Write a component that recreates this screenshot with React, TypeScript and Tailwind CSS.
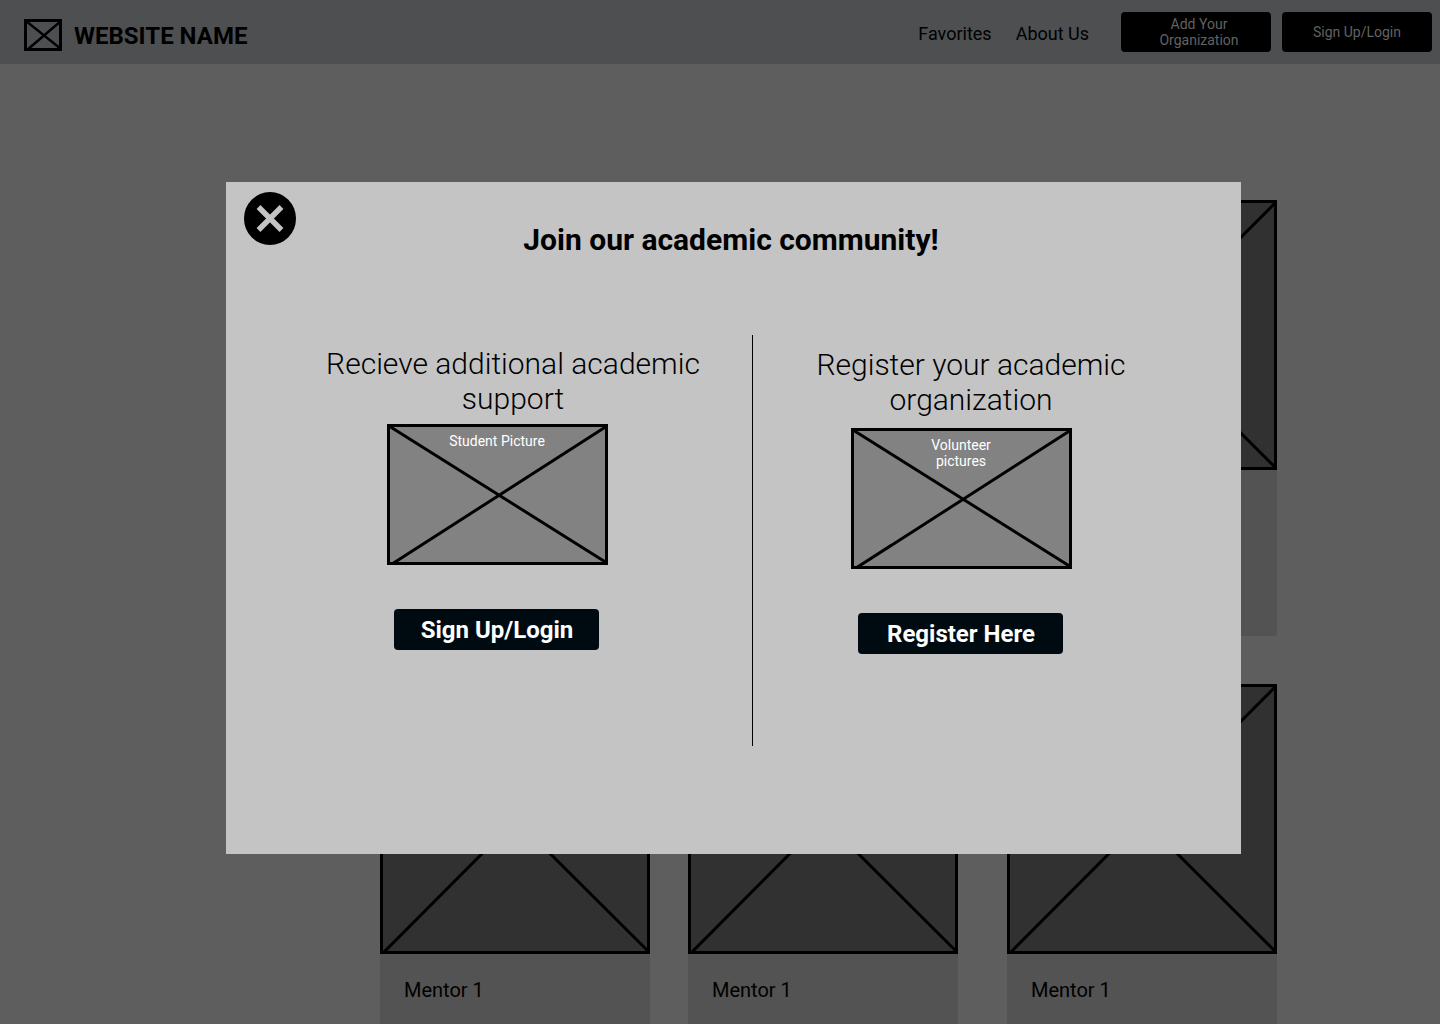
import React from "react";

function CrossBox({
  width,
  height,
  className,
  stroke = 3,
  inset = 3,
}: {
  width: number;
  height: number;
  className: string;
  stroke?: number;
  inset?: number;
}) {
  return (
    <svg viewBox={`0 0 ${width} ${height}`} className={className} aria-hidden="true">
      <rect
        x="1.5"
        y="1.5"
        width={width - 3}
        height={height - 3}
        stroke="#000"
        strokeWidth="3"
      />
      <path
        d={`M2 2L${width - 1} ${height - 2}M${inset} ${height - 1}L${width - 1} 2`}
        stroke="#000"
        strokeWidth={stroke}
      />
    </svg>
  );
}

function MentorCard({ name }: { name?: string }) {
  return (
    <article className="min-h-[436px] w-full max-w-[270px] bg-[#535353]">
      <CrossBox width={270} height={270} className="block w-full fill-[#313131]" />
      {name && <h3 className="px-6 pt-6 text-xl leading-6">{name}</h3>}
    </article>
  );
}

function Option({
  title,
  label,
  action,
  className,
  headingClass,
  pictureClass,
}: {
  title: string;
  label: string;
  action: string;
  className: string;
  headingClass: string;
  pictureClass: string;
}) {
  return (
    <section className={`flex flex-col items-center ${className}`}>
      <h2 className={`text-center text-[30px] leading-[35px] font-light ${headingClass}`}>
        {title}
      </h2>
      <div className={`grid w-[221px] ${pictureClass}`}>
        <CrossBox
          width={221}
          height={141}
          inset={5}
          className="col-start-1 row-start-1 block w-full fill-[#828282]"
        />
        <p className="z-10 col-start-1 row-start-1 mx-auto mt-[9px] max-w-[100px] text-center text-sm leading-4 text-white">
          {label}
        </p>
      </div>
      <button
        type="button"
        className="mt-11 mr-0.5 h-[41px] w-[205px] rounded bg-[#000b11] pl-0.5 text-2xl leading-7 font-bold text-white"
      >
        {action}
      </button>
    </section>
  );
}

export default function App() {
  return (
    <div className="h-screen overflow-hidden bg-[#5e5e5e] font-['Roboto',sans-serif] text-black">
      <header className="flex h-16 items-center justify-between bg-[#4d4f51] pr-2 pl-6">
        <a href="#home" className="flex items-center gap-3 pt-1.5">
          <CrossBox width={38} height={32} stroke={2.4} className="h-8 w-[38px] fill-none" />
          <span className="pt-0.5 text-2xl leading-7 font-bold">WEBSITE NAME</span>
        </a>
        <nav className="flex items-center text-lg leading-5">
          <a href="#favorites" className="mr-6 pt-1">
            Favorites
          </a>
          <a href="#about" className="mr-8 pt-1">
            About Us
          </a>
          <button
            type="button"
            className="mr-[11px] h-10 w-[150px] rounded bg-black pr-7 pl-[34px] text-sm leading-4 text-[#626262]"
          >
            Add Your Organization
          </button>
          <button
            type="button"
            className="h-10 w-[150px] rounded bg-black text-sm leading-4 text-[#626262]"
          >
            Sign Up/Login
          </button>
        </nav>
      </header>

      <main className="grid grid-cols-[308fr_319fr_270fr] gap-y-12 pt-[136px] pr-[163px] pl-[380px]">
        <MentorCard />
        <MentorCard />
        <MentorCard />
        <MentorCard name="Mentor 1" />
        <MentorCard name="Mentor 1" />
        <MentorCard name="Mentor 1" />
      </main>

      <div className="fixed inset-0 flex items-start justify-center pt-[182px] pl-[27px]">
        <div
          role="dialog"
          aria-modal="true"
          aria-labelledby="join-title"
          className="w-full max-w-[1015px] bg-[#c4c4c4] pb-[108px]"
        >
          <div className="grid grid-cols-[52px_1fr_52px] items-start pt-2.5 pr-[23px] pl-[18px]">
            <button type="button" aria-label="Close">
              <svg viewBox="0 0 52 53" className="block w-[52px]" aria-hidden="true">
                <ellipse cx="26" cy="26.5" rx="26" ry="26.5" />
                <path d="M14.5 15L37.5 38M37.5 15L14.5 38" stroke="#c4c4c4" strokeWidth="5.4" />
              </svg>
            </button>
            <h1 id="join-title" className="pt-[30px] text-center text-[30px] leading-[35px] font-bold">
              Join our academic community!
            </h1>
          </div>
          <div className="mt-[78px] grid min-h-[411px] grid-cols-[510fr_1px_416fr] pr-[72px] pl-4">
            <Option
              title="Recieve additional academic support"
              label="Student Picture"
              action="Sign Up/Login"
              className="pt-[11px]"
              headingClass="ml-8 max-w-[400px]"
              pictureClass="mt-2"
            />
            <div className="bg-black" />
            <Option
              title="Register your academic organization"
              label="Volunteer pictures"
              action="Register Here"
              className="pt-3"
              headingClass="ml-5 max-w-[340px]"
              pictureClass="mt-[11px]"
            />
          </div>
        </div>
      </div>
    </div>
  );
}
